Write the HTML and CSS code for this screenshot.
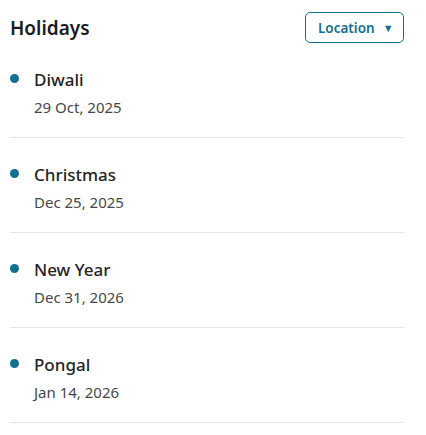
FILE: index.html
```html
<!DOCTYPE html>
<html lang="en">
<head>
<meta charset="utf-8">
<title>Holidays</title>
<link rel="stylesheet" href="styles.css">
</head>
<body>
<div class="panel">
  <header class="header">
    <h2 class="title">Holidays</h2>
    <button class="loc-btn" type="button">Location <span class="caret">▼</span></button>
  </header>
  <ul class="list">
    <li class="item"><span class="dot"></span><div class="info"><div class="name">Diwali</div><div class="date">29 Oct, 2025</div></div></li>
    <li class="item"><span class="dot"></span><div class="info"><div class="name">Christmas</div><div class="date">Dec 25, 2025</div></div></li>
    <li class="item"><span class="dot"></span><div class="info"><div class="name">New Year</div><div class="date">Dec 31, 2026</div></div></li>
    <li class="item"><span class="dot"></span><div class="info"><div class="name">Pongal</div><div class="date">Jan 14, 2026</div></div></li>
  </ul>
</div>
</body>
</html>
```
FILE: styles.css
```css
* { box-sizing: border-box; }
html, body { margin: 0; background: #ffffff; }
body { font-family: "Noto Sans", "Open Sans", sans-serif; color: #242424; }
.panel { padding: 0 22px 0 10px; }
.header { display: flex; justify-content: space-between; align-items: center; padding-top: 12px; height: 43px; }
.title { margin: 0; font-size: 19px; font-weight: 600; line-height: 26px; color: #1b1b1b; }
.loc-btn {
  height: 31px; width: 99px; padding: 0 0 0 12px;
  display: flex; align-items: center; gap: 8px;
  border: 1px solid #136f8f; border-radius: 5px; background: #fff;
  color: #136f8f; font-family: inherit; font-size: 13.5px; font-weight: 600;
}
.caret { font-size: 11px; line-height: 1; }
.list { list-style: none; margin: 0; padding: 0; }
.item { display: flex; gap: 15px; padding: 25px 0 19px; border-bottom: 1px solid #e6e6e6; }
.dot { width: 9px; height: 9px; border-radius: 50%; background: #136f8f; margin-top: 6px; flex: none; }
.name { font-size: 17px; font-weight: 500; line-height: 24px; color: #242424; }
.date { font-size: 15px; line-height: 22px; margin-top: 4px; color: #474747; }
```
